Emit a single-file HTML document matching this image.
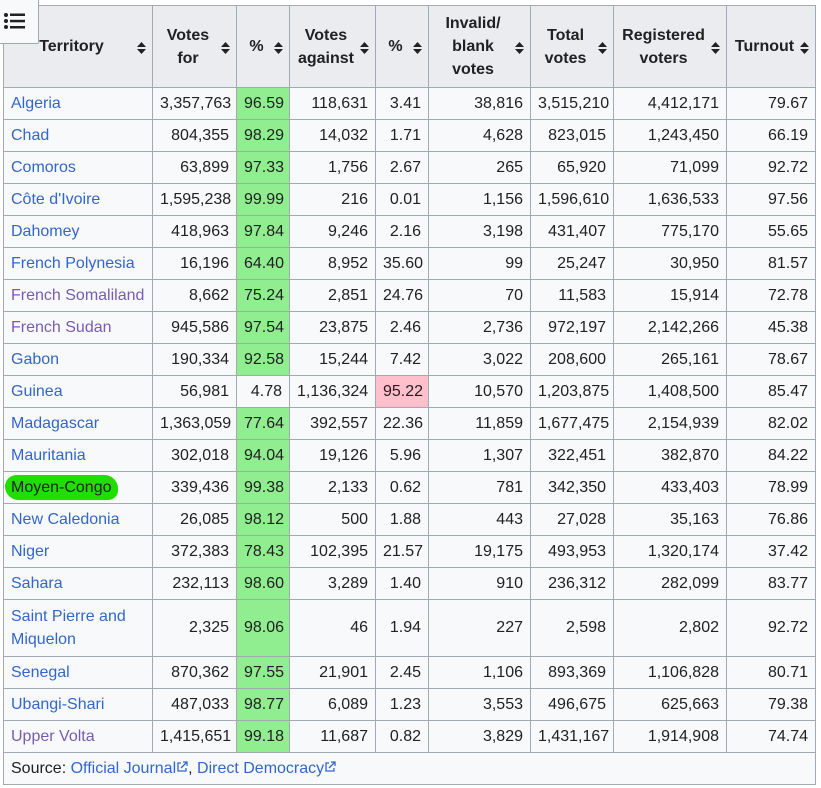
<!DOCTYPE html>
<html><head><meta charset="utf-8"><style>
body{margin:0;background:#fff;font-family:"Liberation Sans",sans-serif;font-size:16px;color:#202122;}
table{position:absolute;left:3px;top:5px;border-collapse:collapse;table-layout:fixed;background:#f8f9fa;width:812px}
td,th{border:1px solid #a2a9b1;padding:0 7px;height:31px;line-height:22px}
th{background:#eaecf0;font-weight:bold;height:81px;line-height:23px;position:relative;padding-right:20px}
th svg{position:absolute;right:6px;top:36px}
td{text-align:right}
td.l{text-align:left}
a{color:#3366cc;text-decoration:none}
a.v{color:#795cb2}
.g{background:#90ee90}.r{background:#ffc0cb}
.src{text-align:left;padding:0 7px}
#toc{position:absolute;left:-1px;top:-1px;width:38px;height:43px;background:#f8f9fa;border:1px solid #a2a9b1;border-radius:0 0 2px 0;z-index:2}
.mc{display:inline-block;background:#22dd00;color:#202122;margin:0 -5px 0 -6px;padding:2px 6px 2px 6px;border-radius:12px 14px 10px 14px;line-height:21px}
</style></head><body>
<div id="toc"><svg width="38" height="43" viewBox="0 0 38 43"><g fill="#202122"><circle cx="6" cy="15" r="2"/><circle cx="6" cy="21" r="2"/><circle cx="6" cy="27" r="2"/><rect x="10" y="13.5" width="15" height="2.5"/><rect x="10" y="19.8" width="15" height="2.5"/><rect x="10" y="26" width="15" height="2.5"/></g></svg></div>
<table>
<colgroup><col style="width:149px"><col style="width:84px"><col style="width:53px"><col style="width:86px"><col style="width:53px"><col style="width:102px"><col style="width:83px"><col style="width:113px"><col style="width:89px"></colgroup>
<tr>
<th>Territory<svg width="9" height="12"><path d="M4.5 0L9 5H0z M4.5 12L9 7H0z" fill="#202122"/></svg></th>
<th>Votes for<svg width="9" height="12"><path d="M4.5 0L9 5H0z M4.5 12L9 7H0z" fill="#202122"/></svg></th>
<th>%<svg width="9" height="12"><path d="M4.5 0L9 5H0z M4.5 12L9 7H0z" fill="#202122"/></svg></th>
<th>Votes against<svg width="9" height="12"><path d="M4.5 0L9 5H0z M4.5 12L9 7H0z" fill="#202122"/></svg></th>
<th>%<svg width="9" height="12"><path d="M4.5 0L9 5H0z M4.5 12L9 7H0z" fill="#202122"/></svg></th>
<th>Invalid/ blank votes<svg width="9" height="12"><path d="M4.5 0L9 5H0z M4.5 12L9 7H0z" fill="#202122"/></svg></th>
<th>Total votes<svg width="9" height="12"><path d="M4.5 0L9 5H0z M4.5 12L9 7H0z" fill="#202122"/></svg></th>
<th>Registered voters<svg width="9" height="12"><path d="M4.5 0L9 5H0z M4.5 12L9 7H0z" fill="#202122"/></svg></th>
<th>Turnout<svg width="9" height="12"><path d="M4.5 0L9 5H0z M4.5 12L9 7H0z" fill="#202122"/></svg></th>
</tr>
<tr><td class="l"><a>Algeria</a></td><td>3,357,763</td><td class="g">96.59</td><td>118,631</td><td>3.41</td><td>38,816</td><td>3,515,210</td><td>4,412,171</td><td>79.67</td></tr>
<tr><td class="l"><a>Chad</a></td><td>804,355</td><td class="g">98.29</td><td>14,032</td><td>1.71</td><td>4,628</td><td>823,015</td><td>1,243,450</td><td>66.19</td></tr>
<tr><td class="l"><a>Comoros</a></td><td>63,899</td><td class="g">97.33</td><td>1,756</td><td>2.67</td><td>265</td><td>65,920</td><td>71,099</td><td>92.72</td></tr>
<tr><td class="l"><a>Côte d'Ivoire</a></td><td>1,595,238</td><td class="g">99.99</td><td>216</td><td>0.01</td><td>1,156</td><td>1,596,610</td><td>1,636,533</td><td>97.56</td></tr>
<tr><td class="l"><a>Dahomey</a></td><td>418,963</td><td class="g">97.84</td><td>9,246</td><td>2.16</td><td>3,198</td><td>431,407</td><td>775,170</td><td>55.65</td></tr>
<tr><td class="l"><a>French Polynesia</a></td><td>16,196</td><td class="g">64.40</td><td>8,952</td><td>35.60</td><td>99</td><td>25,247</td><td>30,950</td><td>81.57</td></tr>
<tr><td class="l"><a class="v">French Somaliland</a></td><td>8,662</td><td class="g">75.24</td><td>2,851</td><td>24.76</td><td>70</td><td>11,583</td><td>15,914</td><td>72.78</td></tr>
<tr><td class="l"><a class="v">French Sudan</a></td><td>945,586</td><td class="g">97.54</td><td>23,875</td><td>2.46</td><td>2,736</td><td>972,197</td><td>2,142,266</td><td>45.38</td></tr>
<tr><td class="l"><a>Gabon</a></td><td>190,334</td><td class="g">92.58</td><td>15,244</td><td>7.42</td><td>3,022</td><td>208,600</td><td>265,161</td><td>78.67</td></tr>
<tr><td class="l"><a>Guinea</a></td><td>56,981</td><td>4.78</td><td>1,136,324</td><td class="r">95.22</td><td>10,570</td><td>1,203,875</td><td>1,408,500</td><td>85.47</td></tr>
<tr><td class="l"><a>Madagascar</a></td><td>1,363,059</td><td class="g">77.64</td><td>392,557</td><td>22.36</td><td>11,859</td><td>1,677,475</td><td>2,154,939</td><td>82.02</td></tr>
<tr><td class="l"><a>Mauritania</a></td><td>302,018</td><td class="g">94.04</td><td>19,126</td><td>5.96</td><td>1,307</td><td>322,451</td><td>382,870</td><td>84.22</td></tr>
<tr><td class="l"><span class="mc">Moyen-Congo</span></td><td>339,436</td><td class="g">99.38</td><td>2,133</td><td>0.62</td><td>781</td><td>342,350</td><td>433,403</td><td>78.99</td></tr>
<tr><td class="l"><a>New Caledonia</a></td><td>26,085</td><td class="g">98.12</td><td>500</td><td>1.88</td><td>443</td><td>27,028</td><td>35,163</td><td>76.86</td></tr>
<tr><td class="l"><a>Niger</a></td><td>372,383</td><td class="g">78.43</td><td>102,395</td><td>21.57</td><td>19,175</td><td>493,953</td><td>1,320,174</td><td>37.42</td></tr>
<tr><td class="l"><a>Sahara</a></td><td>232,113</td><td class="g">98.60</td><td>3,289</td><td>1.40</td><td>910</td><td>236,312</td><td>282,099</td><td>83.77</td></tr>
<tr><td class="l" style="height:56px;line-height:23px"><a>Saint Pierre and Miquelon</a></td><td>2,325</td><td class="g">98.06</td><td>46</td><td>1.94</td><td>227</td><td>2,598</td><td>2,802</td><td>92.72</td></tr>
<tr><td class="l"><a>Senegal</a></td><td>870,362</td><td class="g">97.55</td><td>21,901</td><td>2.45</td><td>1,106</td><td>893,369</td><td>1,106,828</td><td>80.71</td></tr>
<tr><td class="l"><a>Ubangi-Shari</a></td><td>487,033</td><td class="g">98.77</td><td>6,089</td><td>1.23</td><td>3,553</td><td>496,675</td><td>625,663</td><td>79.38</td></tr>
<tr><td class="l"><a class="v">Upper Volta</a></td><td>1,415,651</td><td class="g">99.18</td><td>11,687</td><td>0.82</td><td>3,829</td><td>1,431,167</td><td>1,914,908</td><td>74.74</td></tr>
<tr><td colspan="9" class="src">Source: <a>Official Journal</a><svg width="12" height="12" viewBox="0 0 12 12"><path d="M5 2H2v8h8V7M7 1h4v4M11 1L5 7" stroke="#3366cc" stroke-width="1.3" fill="none"/></svg>, <a>Direct Democracy</a><svg width="12" height="12" viewBox="0 0 12 12"><path d="M5 2H2v8h8V7M7 1h4v4M11 1L5 7" stroke="#3366cc" stroke-width="1.3" fill="none"/></svg></td></tr>
</table>
</body></html>
